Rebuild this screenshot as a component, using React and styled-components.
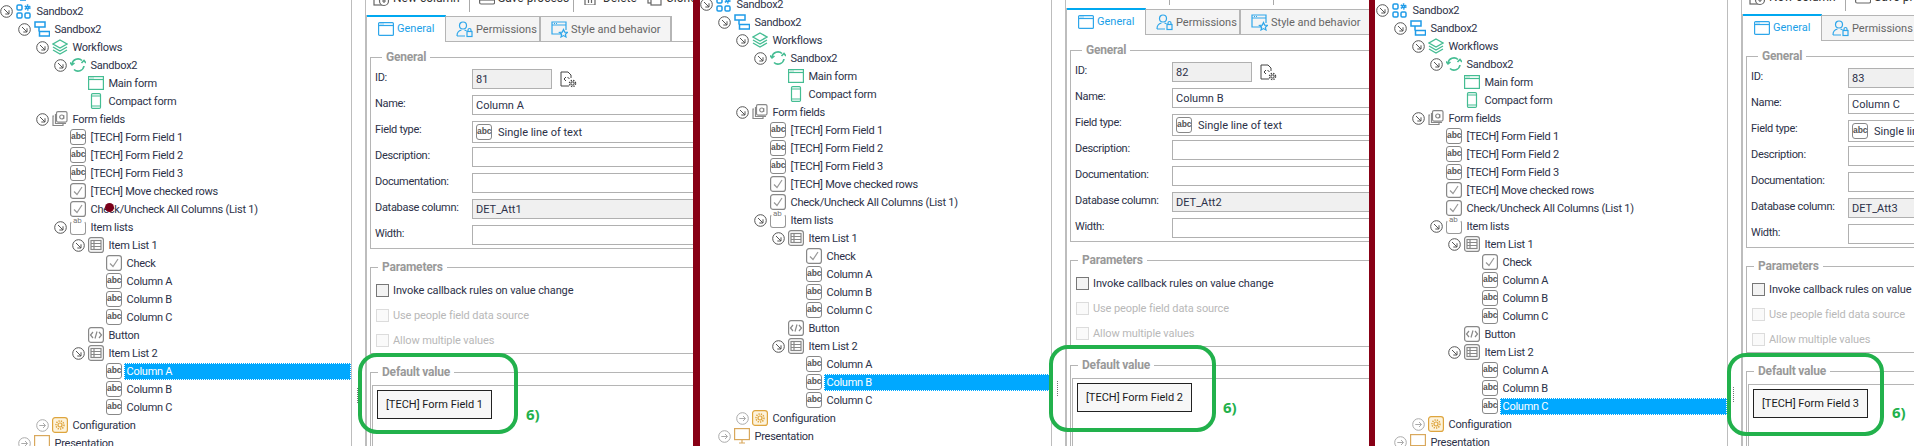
import styled, { createGlobalStyle } from "styled-components"

const Global = createGlobalStyle`
  html, body {
    margin: 0;
    padding: 0;
    background: #fff;
    overflow: hidden;
  }
  * { box-sizing: border-box; }
`

const Page = styled.div`
  display: flex;
  width: 1914px;
  height: 446px;
  overflow: hidden;
  font-family: "Roboto", sans-serif;
  font-size: 11px;
  color: #2c3148;
`
const Pane = styled.div`
  position: relative;
  flex: ${p => p.$width ? `0 0 ${p.$width}px` : "1"};
  height: 446px;
  overflow: hidden;
  padding-left: ${p => p.$inset || 0}px;
`
const Bar = styled.div`
  flex: 0 0 ${p => p.$width}px;
  background: #880015;
`
const Columns = styled.div`
  display: flex;
  width: 1100px;
  margin-top: ${p => p.$shift - 16}px;
`

/* tree */
const Tree = styled.div`
  flex: 0 0 352px;
  height: 480px;
  border-right: 1px solid #bdbdbd;
`
const Row = styled.div`
  display: flex;
  align-items: center;
  height: 18px;
  padding-left: ${p => p.$level * 18}px;
`
const ToggleSlot = styled.span`
  flex: 0 0 16px;
  height: 13px;
  display: flex;
`
const IconSlot = styled.span`
  flex: 0 0 17.5px;
  height: 16px;
  display: flex;
  align-items: center;
`
const Label = styled.span`
  flex: 1;
  height: 17px;
  line-height: 15px;
  padding: 0 2px;
  letter-spacing: -0.25px;
  white-space: nowrap;
  border: 1px dotted ${p => p.$selected ? "#fff" : "transparent"};
  background: ${p => p.$selected ? "#00a8ff" : "transparent"};
  color: ${p => p.$selected ? "#fff" : "inherit"};
`
const AbcBadge = styled.span`
  flex: 0 0 16px;
  width: 16px;
  height: 16px;
  border: 1px solid #888;
  border-radius: 3px;
  font-family: "Liberation Sans", sans-serif;
  font-size: 8.5px;
  font-weight: 700;
  line-height: 13px;
  text-align: center;
  color: #555;
  letter-spacing: -0.1px;
  background: #fff;
`
const ListBadge = styled.span`
  position: relative;
  display: block;
  width: 16px;
  height: 14px;
  margin-top: 2px;
  border: 1px solid #999;
  border-top-color: transparent;
  border-radius: 3px;
`
const ListCaption = styled.span`
  position: absolute;
  top: -5px;
  left: 2px;
  font-size: 8px;
  line-height: 8px;
  color: #777;
`

/* splitter */
const Splitter = styled.div`
  position: relative;
  flex: 0 0 13px;
`
const Grip = styled.div`
  position: absolute;
  top: 404px;
  left: 5px;
  height: 15px;
  border-left: 1px dotted #777;
`

/* form side */
const FormColumn = styled.div`
  flex: 0 0 735px;
  border-left: 1px solid #bdbdbd;
`
const Toolbar = styled.div`
  display: flex;
  align-items: center;
  height: 31px;
  padding: 0 0 3px 7px;
  font-size: 12px;
  color: #333;
`
const ToolItem = styled.div`
  display: flex;
  align-items: center;
  gap: 3px;
  width: ${p => p.$width}px;
  white-space: nowrap;
`
const ToolSeparator = styled.div`
  width: 1px;
  height: 24px;
  margin: 3px 9px 0 0;
  align-self: flex-end;
  background: #aaa;
`
const TabFrame = styled.div`
  border-left: 1px solid #bdbdbd;
`
const TabRow = styled.div`
  display: flex;
  align-items: flex-end;
  height: 27px;
  border-bottom: 1px solid #b5b5b5;
`
const Tab = styled.div`
  display: flex;
  align-items: center;
  width: ${p => p.$width}px;
  gap: 3px;
  white-space: nowrap;
  ${p => p.$active ? `
    height: 27px;
    margin-bottom: -1px;
    padding: 0 0 2px 11px;
    background: #fff;
    border-top: 2px solid #00a8f0;
    border-right: 1px solid #b5b5b5;
    color: #1a9fe8;
  ` : `
    height: 25px;
    padding: 1px 0 0 10px;
    background: #f4f4f4;
    border-top: 1px solid #b5b5b5;
    border-right: 2px solid #b5b5b5;
    color: #666;
  `}
`
const TabBody = styled.div`
  padding-left: 3px;
`
const Group = styled.fieldset`
  margin: ${p => p.$top}px 0 0;
  padding: ${p => p.$pad};
  min-width: 0;
  border: 1px solid #b5b5b5;
`
const GroupTitle = styled.legend`
  margin-left: 7px;
  padding: 0 4px;
  height: 14px;
  line-height: 14px;
  font-size: 12px;
  font-weight: 700;
  letter-spacing: -0.2px;
  color: #999;
`
const FieldRow = styled.div`
  display: flex;
  align-items: flex-start;
  height: ${p => p.$height || 26}px;
`
const FieldLabel = styled.div`
  flex: 0 0 97px;
  height: 20px;
  line-height: 18px;
  letter-spacing: -0.3px;
  white-space: nowrap;
`
const Field = styled.div`
  display: flex;
  align-items: center;
  width: ${p => p.$width || "520px"};
  height: ${p => p.$tall ? 22 : 20}px;
  padding: 0 3px;
  gap: 6px;
  border: 1px solid #b0b0b0;
  background: ${p => p.$readonly ? "#f0f0f0" : "#fff"};
  white-space: nowrap;
`
const IdAction = styled.span`
  display: flex;
  margin: 2px 0 0 8px;
`
const CheckRow = styled.div`
  display: flex;
  align-items: center;
  gap: 4px;
  height: 25px;
  padding-left: 5px;
  letter-spacing: -0.1px;
  white-space: nowrap;
  color: ${p => p.$disabled ? "#b8b8b8" : "inherit"};
`
const CheckBox = styled.span`
  width: 13px;
  height: 13px;
  border: 1px solid ${p => p.$disabled ? "#dcdcdc" : "#777"};
  background: ${p => p.$disabled ? "#fafafa" : "#f3f3f3"};
`
const ValueBox = styled.div`
  height: 100px;
  margin-left: 1px;
  padding: 4px;
  border: 1px solid #b5b5b5;
`
const ValueButton = styled.div`
  display: flex;
  align-items: center;
  justify-content: center;
  width: 115px;
  height: 29px;
  border: 1px solid #222;
  background: #f7f7f7;
  color: #1a1a22;
  white-space: nowrap;
`

/* annotations on top of the screenshot */
const Highlight = styled.div`
  position: absolute;
  left: ${p => p.$left}px;
  top: ${p => p.$top}px;
  width: ${p => p.$width}px;
  height: ${p => p.$height}px;
  border: 4px solid #22b14c;
  border-radius: 19px;
`
const StepMark = styled.div`
  position: absolute;
  left: ${p => p.$left}px;
  top: ${p => p.$top}px;
  font-family: "Open Sans", sans-serif;
  font-size: 15px;
  line-height: 18px;
  font-weight: 700;
  color: #22b14c;
`
const CursorDot = styled.div`
  position: absolute;
  left: 105px;
  top: 203px;
  width: 9px;
  height: 9px;
  border-radius: 50%;
  background: #7a0019;
`

const BLUE = "#1e9be8"
const GREEN = "#45bd93"
const GREY = "#888"

const Svg = ({ size = 16, height, color, width = 1.2, children }) => (
  <svg width={size} height={height || size} viewBox={`0 0 ${size} ${height || size}`} fill="none" stroke={color} strokeWidth={width}>
    {children}
  </svg>
)

const Gear = ({ x, y, r = 3 }) => (
  <>
    <circle cx={x} cy={y} r={r * 0.5} />
    <circle cx={x} cy={y} r={r} strokeDasharray="1.3 1.1" strokeWidth="1.5" />
  </>
)

const Toggle = ({ open }) => open ? (
  <Svg size={13} color="#555" width={1}>
    <circle cx="6.5" cy="6.5" r="5.8" />
    <path d="M4 4l5 5M9 5.3V9H5.3" />
  </Svg>
) : (
  <Svg size={13} color="#aaa" width={1}>
    <circle cx="6.5" cy="6.5" r="5.8" />
    <path d="M3.3 6.5h6M7 4l2.5 2.5L7 9" />
  </Svg>
)

const icons = {
  root: () => (
    <Svg color={BLUE} width={1.6}><path d="M4 15h6" /></Svg>
  ),
  apps: () => (
    <Svg color={BLUE} width={1.5}>
      <rect x="1" y="2" width="5" height="5" rx="1.2" />
      <rect x="1" y="10" width="5" height="5" rx="1.2" />
      <rect x="9" y="10" width="5" height="5" rx="1.2" />
      <Gear x={11.5} y={4.5} r={2.4} />
    </Svg>
  ),
  process: () => (
    <Svg color={BLUE} width={1.5}>
      <rect x="1" y="1" width="10" height="5" />
      <rect x="5.5" y="10.5" width="10" height="4.5" />
      <path d="M5 6v4.5" />
    </Svg>
  ),
  layers: () => (
    <Svg color={GREEN} width={1.4}>
      <path d="M8 1l7 4-7 4-7-4z" />
      <path d="M1 8l7 4 7-4" />
      <path d="M1 11l7 4 7-4" />
    </Svg>
  ),
  sync: () => (
    <Svg color={GREEN} width={1.6}>
      <path d="M2 7a6 6 0 0 1 10-3.5" />
      <path d="M14 9a6 6 0 0 1-10 3.5" />
      <path d="M0 5.5l2 2.5 2.5-2M11.5 6l2.5-2.5 2 2.5" />
    </Svg>
  ),
  window: () => (
    <Svg color={GREEN} height={14}>
      <rect x="0.6" y="0.6" width="14.8" height="12.8" />
      <path d="M1 3.5h14" />
      <path d="M2.5 2h3" strokeDasharray="1 1" />
    </Svg>
  ),
  phone: () => (
    <Svg color={GREEN}>
      <rect x="3.5" y="0.6" width="9" height="14.8" rx="1.2" />
      <path d="M3.5 3h9M3.5 13h9" />
    </Svg>
  ),
  fields: () => (
    <Svg color={GREY}>
      <path d="M2 5H1v9.5h10V13" />
      <path d="M3.5 3v9.5H14" />
      <rect x="4.5" y="0.6" width="10.5" height="10.5" rx="1.5" />
      <circle cx="9.7" cy="6" r="2" />
      <path d="M11.7 4v4" />
    </Svg>
  ),
  abc: () => <AbcBadge>abc</AbcBadge>,
  check: () => (
    <Svg color={GREY}>
      <rect x="0.6" y="0.6" width="14.8" height="14.8" rx="2.5" />
      <path d="M4 8.5l3 3 5-7.5" stroke="#999" />
    </Svg>
  ),
  lists: () => <ListBadge><ListCaption>ab</ListCaption></ListBadge>,
  table: () => (
    <Svg color={GREY}>
      <rect x="0.6" y="0.6" width="14.8" height="14.8" rx="2.5" />
      <rect x="3" y="3.5" width="10" height="9" />
      <path d="M3 6.5h10M3 9.5h10M6 3.5v9" />
    </Svg>
  ),
  code: () => (
    <Svg color={GREY}>
      <rect x="0.6" y="0.6" width="14.8" height="14.8" rx="2.5" />
      <path d="M5 5L2.5 8 5 11M11 5l2.5 3L11 11M9 4.5l-2 7" />
    </Svg>
  ),
  config: () => (
    <Svg color="#dea53e">
      <rect x="0.6" y="0.6" width="14.8" height="14.8" rx="2.5" fill="#fdf3dc" />
      <Gear x={8} y={8} r={4} />
    </Svg>
  ),
  monitor: () => (
    <Svg color="#d9a85c">
      <rect x="0.6" y="0.6" width="14.8" height="11" />
      <path d="M5 15h6M8 12v3" />
    </Svg>
  ),
}

const treeRows = [
  { level: 0, icon: "root", text: "" },
  { level: 0, icon: "apps", text: "Sandbox2", open: true },
  { level: 1, icon: "process", text: "Sandbox2", open: true },
  { level: 2, icon: "layers", text: "Workflows", open: true },
  { level: 3, icon: "sync", text: "Sandbox2", open: true },
  { level: 4, icon: "window", text: "Main form" },
  { level: 4, icon: "phone", text: "Compact form" },
  { level: 2, icon: "fields", text: "Form fields", open: true },
  { level: 3, icon: "abc", text: "[TECH] Form Field 1" },
  { level: 3, icon: "abc", text: "[TECH] Form Field 2" },
  { level: 3, icon: "abc", text: "[TECH] Form Field 3" },
  { level: 3, icon: "check", text: "[TECH] Move checked rows" },
  { level: 3, icon: "check", text: "Check/Uncheck All Columns (List 1)" },
  { level: 3, icon: "lists", text: "Item lists", open: true },
  { level: 4, icon: "table", text: "Item List 1", open: true },
  { level: 5, icon: "check", text: "Check" },
  { level: 5, icon: "abc", text: "Column A" },
  { level: 5, icon: "abc", text: "Column B" },
  { level: 5, icon: "abc", text: "Column C" },
  { level: 4, icon: "code", text: "Button" },
  { level: 4, icon: "table", text: "Item List 2", open: true },
  { level: 5, icon: "abc", text: "Column A", key: "A" },
  { level: 5, icon: "abc", text: "Column B", key: "B" },
  { level: 5, icon: "abc", text: "Column C", key: "C" },
  { level: 2, icon: "config", text: "Configuration", open: false },
  { level: 1, icon: "monitor", text: "Presentation", open: false },
]

const panes = [
  { letter: "A", id: 81, field: 1, db: "DET_Att1", shift: 0, width: 693, bar: 7, box: [358, 353, 160, 81], mark: [526, 405], dot: true },
  { letter: "B", id: 82, field: 2, db: "DET_Att2", shift: -7, width: 669, bar: 6, box: [349, 345, 167, 87], mark: [523, 398] },
  { letter: "C", id: 83, field: 3, db: "DET_Att3", shift: -1, inset: 1, box: [352, 353, 157, 83], mark: [517, 403] },
]

const TreeRow = ({ row, selected }) => {
  const Icon = icons[row.icon]
  return (
    <Row $level={row.level}>
      <ToggleSlot>{row.open !== undefined && <Toggle open={row.open} />}</ToggleSlot>
      <IconSlot><Icon /></IconSlot>
      {row.text && <Label $selected={row.key && row.key === selected}>{row.text}</Label>}
    </Row>
  )
}

const TopTools = () => (
  <Toolbar>
    <ToolItem $width={96}>
      <Svg size={17} color="#666"><rect x="1" y="3" width="9" height="12" /><circle cx="11" cy="11" r="4.5" fill="#fff" /><path d="M11 9v4M9 11h4" /></Svg>
      New column
    </ToolItem>
    <ToolSeparator />
    <ToolItem $width={94}>
      <Svg size={16} color="#666"><rect x="0.6" y="1" width="15" height="13" rx="1.5" /><path d="M1 10h14" /></Svg>
      Save process
    </ToolItem>
    <ToolSeparator />
    <ToolItem $width={64}>
      <Svg size={14} color="#666"><path d="M2 2h10v12H2zM5.5 4v8M8.5 4v8" /></Svg>
      &nbsp;Delete
    </ToolItem>
    <ToolItem $width={60}>
      <Svg size={16} color="#666"><rect x="1" y="1" width="10" height="12" /><rect x="4" y="4" width="10" height="11" fill="#fff" /></Svg>
      Clone
    </ToolItem>
  </Toolbar>
)

const Tabs = () => (
  <TabRow>
    <Tab $active $width={79}>
      <Svg color="#2ea6ea" height={14}>
        <rect x="0.6" y="0.6" width="14.8" height="12.8" rx="1" />
        <path d="M1 3.5h14" />
        <path d="M2.5 2h3" strokeDasharray="1 1" />
      </Svg>
      General
    </Tab>
    <Tab $width={95}>
      <Svg size={17} color="#2ea6ea">
        <circle cx="7" cy="4.5" r="3.5" />
        <path d="M1 15c0-3.5 2-5.5 4.500-6M8.500 9l2 .8M1 15h8" />
        <rect x="11" y="10.5" width="5" height="5" />
        <path d="M12 10.5V9a1.5 1.5 0 0 1 3 0v1.5" />
      </Svg>
      Permissions
    </Tab>
    <Tab $width={131}>
      <Svg size={17} color="#2ea6ea">
        <path d="M11 13H1V1h14v8M1 4h14" />
        <path d="M3 2.5h3" strokeDasharray="1 1" />
        <path d="M12.5 8.5l1.2 2.6 2.8.3-2.1 1.9.6 2.7-2.5-1.4-2.5 1.4.6-2.7-2.1-1.9 2.8-.3z" />
      </Svg>
      Style and behavior
    </Tab>
  </TabRow>
)

const Form = ({ pane }) => (
  <TabBody>
    <Group $top={8} $pad="5px 0 3px 4px">
      <GroupTitle>General</GroupTitle>
      <FieldRow>
        <FieldLabel>ID:</FieldLabel>
        <Field $readonly $width="80px">{pane.id}</Field>
        <IdAction>
          <Svg size={17} color="#444" width={1}>
            <path d="M9 15H1V1h7l3 3v3" />
            <path d="M6 6L4 8l2 2M7.5 6l2 2" />
            <Gear x={12.5} y={12.5} r={3} />
          </Svg>
        </IdAction>
      </FieldRow>
      <FieldRow>
        <FieldLabel>Name:</FieldLabel>
        <Field>Column {pane.letter}</Field>
      </FieldRow>
      <FieldRow>
        <FieldLabel>Field type:</FieldLabel>
        <Field $tall><AbcBadge>abc</AbcBadge>Single line of text</Field>
      </FieldRow>
      <FieldRow>
        <FieldLabel>Description:</FieldLabel>
        <Field />
      </FieldRow>
      <FieldRow>
        <FieldLabel>Documentation:</FieldLabel>
        <Field />
      </FieldRow>
      <FieldRow>
        <FieldLabel>Database column:</FieldLabel>
        <Field $readonly>{pane.db}</Field>
      </FieldRow>
      <FieldRow $height={20}>
        <FieldLabel>Width:</FieldLabel>
        <Field />
      </FieldRow>
    </Group>
    <Group $top={11} $pad="4px 0 0">
      <GroupTitle>Parameters</GroupTitle>
      <CheckRow><CheckBox />Invoke callback rules on value change</CheckRow>
      <CheckRow $disabled><CheckBox $disabled />Use people field data source</CheckRow>
      <CheckRow $disabled><CheckBox $disabled />Allow multiple values</CheckRow>
    </Group>
    <Group $top={11} $pad="6px 0 0">
      <GroupTitle>Default value</GroupTitle>
      <ValueBox>
        <ValueButton>[TECH] Form Field {pane.field}</ValueButton>
      </ValueBox>
    </Group>
  </TabBody>
)

const ScreenPane = ({ pane }) => (
  <Pane $width={pane.width} $inset={pane.inset}>
    <Columns $shift={pane.shift}>
      <Tree>
        {treeRows.map((row, i) => <TreeRow key={i} row={row} selected={pane.letter} />)}
      </Tree>
      <Splitter><Grip /></Splitter>
      <FormColumn>
        <TopTools />
        <TabFrame>
          <Tabs />
          <Form pane={pane} />
        </TabFrame>
      </FormColumn>
    </Columns>
    <Highlight $left={pane.box[0]} $top={pane.box[1]} $width={pane.box[2]} $height={pane.box[3]} />
    <StepMark $left={pane.mark[0]} $top={pane.mark[1]}>6)</StepMark>
    {pane.dot && <CursorDot />}
  </Pane>
)

const App = () => (
  <Page>
    <Global />
    {panes.flatMap(pane => [
      <ScreenPane key={pane.id} pane={pane} />,
      pane.bar ? <Bar key={`bar${pane.id}`} $width={pane.bar} /> : null,
    ])}
  </Page>
)

export default App
